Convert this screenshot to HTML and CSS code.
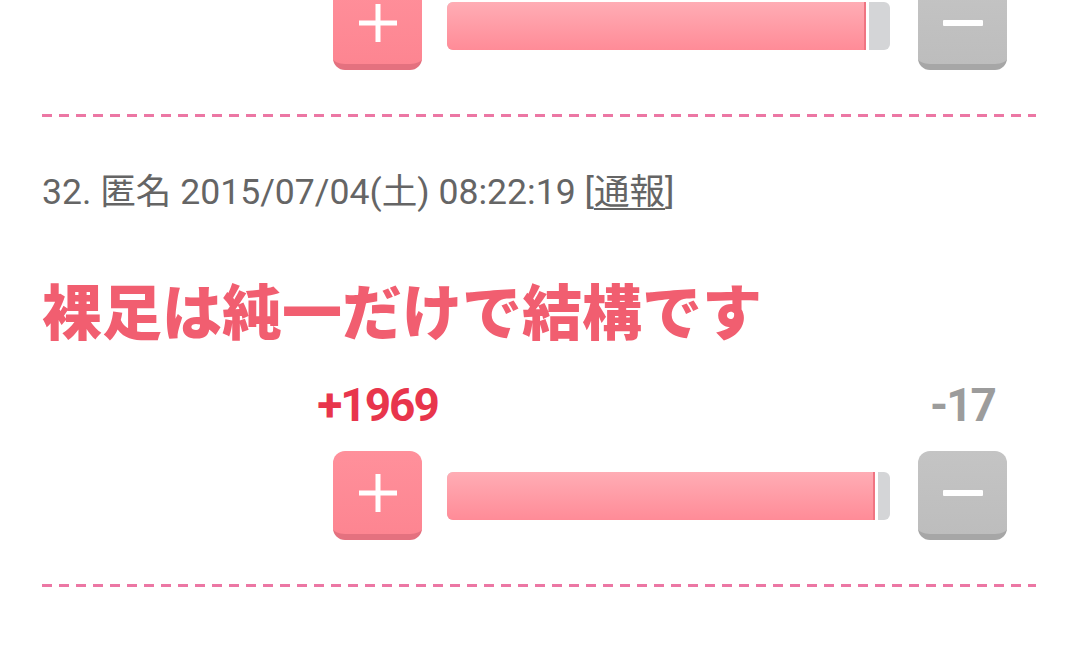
FILE: index.html
```html
<!DOCTYPE html>
<html lang="ja">
<head>
<meta charset="UTF-8">
<meta name="viewport" content="width=device-width, initial-scale=1.0">
<title>コメント</title>
<link rel="stylesheet" href="styles.css">
</head>
<body>
<div class="thread">
    <!-- previous comment, only its vote bar is still on screen -->
    <div class="entry entry-prev">
        <div class="vote">
            <button class="vote-btn plus">
                <svg width="38" height="38" viewBox="0 0 38 38"><rect x="16.5" y="0" width="5" height="38" fill="#fff"/><rect x="0" y="16.5" width="38" height="5" fill="#fff"/></svg>
            </button>
            <div class="bar"><div class="bar-good" style="width: 95.3%"></div></div>
            <button class="vote-btn minus">
                <svg width="40" height="6" viewBox="0 0 40 6"><rect x="0" y="0" width="40" height="6" rx="1" fill="#fff"/></svg>
            </button>
        </div>
    </div>
    <div class="rule"></div>

    <div class="entry">
        <div class="meta">32. 匿名 2015/07/04(土) 08:22:19 [<a href="#">通報</a>]</div>
        <p class="comment">裸足は純一だけで結構です</p>
        <div class="tally">
            <span class="count count-plus">+1969</span>
            <span class="count count-minus">-17</span>
        </div>
        <div class="vote">
            <button class="vote-btn plus">
                <svg width="38" height="38" viewBox="0 0 38 38"><rect x="16.5" y="0" width="5" height="38" fill="#fff"/><rect x="0" y="16.5" width="38" height="5" fill="#fff"/></svg>
            </button>
            <div class="bar"><div class="bar-good" style="width: 97.4%"></div></div>
            <button class="vote-btn minus">
                <svg width="40" height="6" viewBox="0 0 40 6"><rect x="0" y="0" width="40" height="6" rx="1" fill="#fff"/></svg>
            </button>
        </div>
    </div>
    <div class="rule"></div>
</div>
</body>
</html>
```

FILE: styles.css
```css
* {
    margin: 0;
    padding: 0;
    box-sizing: border-box;
}

body {
    font-family: Roboto, "Noto Sans CJK JP", sans-serif;
    background: #fff;
    overflow: hidden;
}

.thread {
    padding: 0 44px 0 42px;
}

/* ENTRY */
.entry-prev {
    margin-top: -19px;
}

.meta {
    margin-top: 54px;
    font-size: 35.6px;
    line-height: 43px;
    color: #656565;
    white-space: nowrap;
}

.meta a {
    color: #656565;
    text-decoration: underline;
    text-underline-offset: 4px;
    text-decoration-thickness: 2px;
}

.comment {
    margin-top: 65px;
    font-family: "Noto Sans CJK JP", sans-serif;
    font-size: 60px;
    font-weight: 900;
    line-height: 60px;
    color: #f15e70;
    white-space: nowrap;
}

/* COUNTS */
.tally {
    width: 674px;
    margin: 42px 29px 0 auto;
    display: flex;
    justify-content: space-between;
}

.count {
    width: 89px;
    display: flex;
    justify-content: center;
    font-size: 46px;
    font-weight: bold;
    line-height: 48px;
    letter-spacing: -2px;
    white-space: nowrap;
}

.count-plus {
    color: #e8354c;
}

.count-minus {
    color: #9c9c9c;
}

/* VOTE ROW */
.vote {
    width: 674px;
    margin: 22px 29px 0 auto;
    display: flex;
    align-items: flex-start;
    gap: 25px;
}

.entry-prev .vote {
    margin-top: 0;
}

.vote-btn {
    width: 89px;
    height: 89px;
    border: none;
    border-radius: 12px;
    border-bottom: 6px solid;
    display: flex;
    justify-content: center;
    align-items: center;
    cursor: pointer;
    flex: none;
}

.vote-btn.plus {
    background: linear-gradient(#ff909b, #fd8591);
    border-bottom-color: #e4717f;
}

.vote-btn.minus {
    margin-left: 3px;
    background: linear-gradient(#c4c4c4, #bdbdbd);
    border-bottom-color: #a6a6a6;
}

.bar {
    flex: 1;
    height: 48px;
    margin-top: 21px;
    border-radius: 6px;
    background: #d4d5d7;
    overflow: hidden;
}

.bar-good {
    height: 100%;
    background: linear-gradient(#ffadb5, #ff8b97);
    border-right: 3px solid #fff;
    box-shadow: inset -2px 0 0 #f07482;
}

/* DASHED SEPARATOR */
.rule {
    height: 3px;
    margin-top: 44px;
    background: repeating-linear-gradient(to right, #ec77a4 0 10px, transparent 10px 17px);
}
```
